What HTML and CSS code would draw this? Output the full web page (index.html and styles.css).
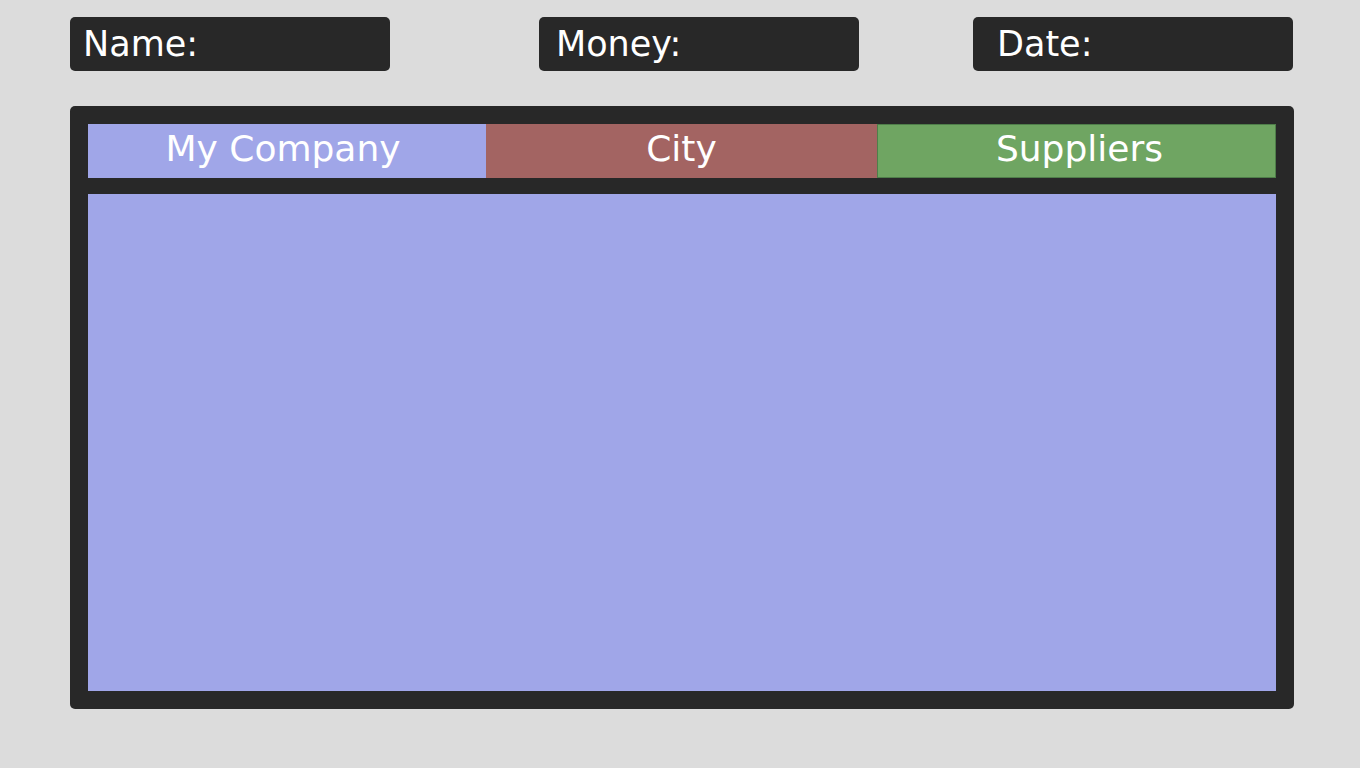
FILE: index.html
```html
<!DOCTYPE html>
<html>
<head>
<meta charset="utf-8">
<link rel="stylesheet" href="styles.css">
</head>
<body>
<div class="page">
  <div class="topbar">
    <div class="field field-name">Name:</div>
    <div class="field field-money">Money:</div>
    <div class="field field-date">Date:</div>
  </div>
  <div class="panel">
    <div class="tabs">
      <div class="tab tab-company">My Company</div>
      <div class="tab tab-city">City</div>
      <div class="tab tab-suppliers">Suppliers</div>
    </div>
    <div class="content"></div>
  </div>
</div>
</body>
</html>
```
FILE: styles.css
```css
html, body {
  margin: 0;
  padding: 0;
  background: #dcdcdc;
}
body {
  font-family: "DejaVu Sans", Verdana, sans-serif;
  color: #ffffff;
}
.page {
  width: 1360px;
  height: 768px;
  padding: 17px 0 0 70px;
  box-sizing: border-box;
}
.topbar {
  display: flex;
  height: 54px;
}
.field {
  width: 320px;
  height: 54px;
  box-sizing: border-box;
  background: #282828;
  border-radius: 5px;
  font-size: 35px;
  display: flex;
  align-items: center;
  line-height: 1;
}
.field-name { padding-left: 13px; }
.field-money { margin-left: 149px; padding-left: 17px; }
.field-date { margin-left: 114px; padding-left: 24px; }
.panel {
  margin-top: 35px;
  width: 1224px;
  height: 603px;
  box-sizing: border-box;
  background: #282828;
  border-radius: 5px;
  padding: 18px;
  display: flex;
  flex-direction: column;
  gap: 16px;
}
.tabs {
  display: grid;
  grid-template-columns: 398px 391px 1fr;
  height: 54px;
}
.tab {
  display: flex;
  align-items: center;
  justify-content: center;
  font-size: 36px;
  line-height: 1;
  padding-bottom: 4px;
  box-sizing: border-box;
}
.tab-company { background: #a0a6e8; padding-right: 8px; }
.tab-city { background: #a36462; }
.tab-suppliers { background: #6fa562; border: 1px solid #4f7e4a; padding-left: 6px; }
.content {
  flex: 1;
  background: #a0a6e8;
}
```
